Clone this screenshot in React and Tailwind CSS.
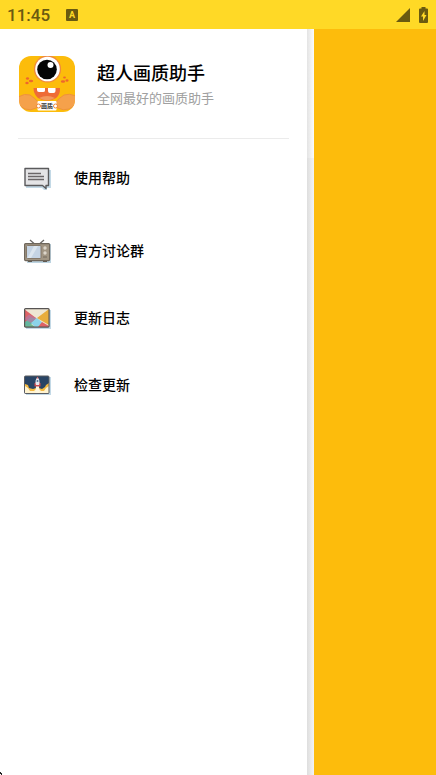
const HelpIcon = () => (
  <svg viewBox="0 0 27 24" className="mt-0.5 h-6 w-[27px]" aria-hidden="true">
    <path d="M2 4h25v18h-4v2h-3l-2-2H2z" fill="#c3d9e6" />
    <path d="M1 2.500h23.500v17H22v3l-3.500-3H1z" fill="#e4e4e6" stroke="#5a5a5c" strokeWidth="1.400" strokeLinejoin="round" />
    <path d="M4 7.500h13M4 10.500h16M4 13.500h16" stroke="#6a6668" strokeWidth="1.300" />
  </svg>
);

const TvIcon = () => (
  <svg viewBox="0 0 27 24" className="mt-0.5 h-6 w-[27px]" aria-hidden="true">
    <path d="M3 5h24v19H3z" fill="#bcd3e0" />
    <path d="M6 1l4 3.500M20 1l-4 3.500" stroke="#6a6866" strokeWidth="1.300" fill="none" />
    <path d="M4 21h4v2H4zM19 21h4v2h-4z" fill="#5b544c" />
    <rect x="0.600" y="4.600" width="25" height="17" rx="1" fill="#a19583" stroke="#6f675c" strokeWidth="1.200" />
    <rect x="2.500" y="6.500" width="14.500" height="13" rx="1" fill="#c5d4e4" stroke="#85796a" />
    <path d="M10 7h4L7 19H3.500z" fill="#dce6ef" />
    <circle cx="21" cy="9" r="1.700" fill="#dcd5ca" />
    <circle cx="21" cy="14" r="1.700" fill="#dcd5ca" />
    <path d="M19 18h4" stroke="#756b5e" />
  </svg>
);

const LogIcon = () => (
  <svg viewBox="0 0 27 24" className="mt-0.5 h-6 w-[27px]" aria-hidden="true">
    <path d="M2 4h25v19H2z" fill="#c3d9e6" />
    <path d="M0 3h25v18H0z" fill="#eee6d3" />
    <path d="M0 3v14l12-5z" fill="#df6265" />
    <path d="M0 17l6-5.500 6 1L5 21H0z" fill="#64b6a0" />
    <path d="M5 8.500l8 4-6 4.500-7-4z" fill="#b57aa4" opacity="0.750" />
    <path d="M7 17l6-5 6 5-5 4h-3z" fill="#8bd4ea" />
    <path d="M25 3v16l-12-7z" fill="#e8ad3d" />
    <path d="M18 16l7 4v1H14z" fill="#df6265" />
    <path d="M1 18l4 3H1zM7 18l4 3H3z" fill="#70b98f" />
    <rect x="0.600" y="2.600" width="24.500" height="18.500" rx="1" fill="none" stroke="#575454" strokeWidth="1.200" />
  </svg>
);

const UpdateIcon = () => (
  <svg viewBox="0 0 27 24" className="mt-0.5 h-6 w-[27px]" aria-hidden="true">
    <path d="M2 4h25v18H2z" fill="#c3d9e6" />
    <rect x="0.500" y="3" width="24.500" height="17.500" rx="1" fill="#294465" />
    <path d="M1 11l3 1 1 3 4 1 3-1V8h3v7l3 1 3-2 1-2 3-2v10H1z" fill="#f3b83f" />
    <path d="M1 13l3 2 2 3h4l2-2h3l2 2h3l2-3 3-2v7H1z" fill="#fff3d0" />
    <path d="M12 13h3l.500 7h-4z" fill="#fff7df" />
    <path d="M10.500 10.500l2-2h2l2 2v3h-6z" fill="#c84d52" />
    <path d="M13.500 4q3 3 1.500 8h-3q-1.500-5 1.500-8z" fill="#e5e9f1" />
    <path d="M12.500 5.500l1-2 1 2z" fill="#d85b5d" />
    <circle cx="13.500" cy="8" r="1" fill="#536f91" />
    <rect x="0.500" y="3" width="24.500" height="17.500" rx="1" fill="none" stroke="#5b5c60" />
  </svg>
);

const AppLogo = () => (
  <div className="relative size-14 overflow-hidden rounded-xl">
    <svg viewBox="0 0 56 56" className="size-14" aria-hidden="true">
      <rect width="56" height="56" fill="#fcbc0b" />
      <circle cx="28.500" cy="13" r="13.600" fill="#f0893e" />
      <circle cx="28.500" cy="13" r="12.300" fill="#fff" />
      <circle cx="28" cy="13.500" r="9.800" fill="#050505" />
      <circle cx="31.500" cy="9" r="3" fill="#fff" />
      <g fill="#ee672d">
        <ellipse cx="8.500" cy="22.500" rx="1.600" ry="1.200" />
        <ellipse cx="12" cy="25" rx="2.200" ry="1.300" />
        <ellipse cx="8" cy="27" rx="1.700" ry="1.200" />
        <ellipse cx="45.500" cy="21.500" rx="1.400" ry="1.100" />
        <ellipse cx="44" cy="25.500" rx="2.200" ry="1.300" />
        <ellipse cx="48" cy="24.500" rx="1.500" ry="1.200" />
      </g>
      <path d="M14.500 32h26.500q.5 12-13 12.500-13-.5-13.500-12.500z" fill="#ee6b36" />
      <path d="M18 32h8v2.500q0 1.500-2 1.500h-4q-2 0-2-2zM29 32h7.500v3q0 2-2 2H31q-2 0-2-2z" fill="#fff" />
      <path d="M20 42q8-4 16 0-8 4.500-16 0z" fill="#f39a5c" />
      <g fill="#f5a14b" stroke="#ee923c">
        <path d="M-1 41Q6 37 11 39q5 3 9 8 1 3-3 5-5 3-11 1-4-2-7-5z" />
        <path d="M57 40q-7-3-12-1-5 3-9 8-1 3 3 5 5 3 11 1 4-2 7-5z" />
      </g>
      <rect x="18.500" y="45" width="19" height="9.500" rx="1" fill="#fff" />
      <circle cx="19.500" cy="50" r="2" fill="#fff" stroke="#ef8637" />
      <circle cx="36.500" cy="50" r="2" fill="#fff" stroke="#ef8637" />
    </svg>
    <span className="absolute inset-x-0 bottom-0 text-center text-[6px] leading-[12px] font-bold text-[#333]">
      画质
    </span>
  </div>
);

const menuItems = [
  { label: "使用帮助", icon: HelpIcon, className: "mb-1.5" },
  { label: "官方讨论群", icon: TvIcon },
  { label: "更新日志", icon: LogIcon },
  { label: "检查更新", icon: UpdateIcon },
];

const StatusBar = () => (
  <header className="flex h-[29px] items-center bg-[#ffd926] pr-2 pl-[7px] text-[#6a5a10]">
    <span className="font-[Roboto] text-[17px] leading-5 font-medium">11:45</span>
    <span className="ml-4 flex size-3 items-center justify-center rounded-[1px] bg-[#6a5a10] font-[Roboto] text-[9px] leading-3 font-bold text-[#ffd926]">
      A
    </span>
    <div className="ml-auto flex items-center gap-[9px]">
      <svg viewBox="0 0 14 14" className="size-3.5" aria-hidden="true">
        <path d="M14 0v14H0z" fill="currentColor" />
      </svg>
      <svg viewBox="0 0 9 16" className="h-4 w-[9px]" aria-hidden="true">
        <path d="M2.500 0h4v1.500H8q1 0 1 1V15q0 1-1 1H1q-1 0-1-1V2.500q0-1 1-1h1.500z" fill="currentColor" />
        <path d="M5.500 4L2 9.500h2V14l3.500-6h-2z" fill="#ffd926" />
      </svg>
    </div>
  </header>
);

const App = () => {
  return (
    <div className="flex min-h-screen flex-col bg-white font-['Noto_Sans_CJK_SC',sans-serif]">
      <StatusBar />
      <main className="flex flex-1">
        <aside className="relative flex-1 bg-white">
          <div className="mx-[18px] flex h-[110px] items-center gap-[22px] border-b border-[#ebebeb] pl-px">
            <AppLogo />
            <div>
              <h1 className="text-lg leading-7 font-medium text-black">超人画质助手</h1>
              <p className="text-[13px] leading-6 text-[#a0a0a0]">全网最好的画质助手</p>
            </div>
          </div>
          <nav className="pt-1">
            {menuItems.map(({ label, icon: Icon, className }) => (
              <button
                key={label}
                type="button"
                className={`flex h-[67px] w-full items-center gap-[23px] px-6 text-left ${className || ""}`}
              >
                <Icon />
                <span className="text-sm leading-6 font-medium text-black">{label}</span>
              </button>
            ))}
          </nav>
          <svg viewBox="0 0 2 3" className="absolute bottom-0 left-0 h-[3px] w-0.5" aria-hidden="true">
            <path d="M0 0h1v1h1v2H1V2H0z" fill="#222" />
          </svg>
        </aside>
        <div className="flex w-[7px] flex-col">
          <div className="h-[129px] bg-gradient-to-r from-[#e4e4e4] to-[#fbfbfb]" />
          <div className="flex-1 bg-gradient-to-r from-[#dedede] to-[#f3f3f3]" />
        </div>
        <div className="w-[28%] bg-[#fdbc0c]" />
      </main>
    </div>
  );
};

export default App;
